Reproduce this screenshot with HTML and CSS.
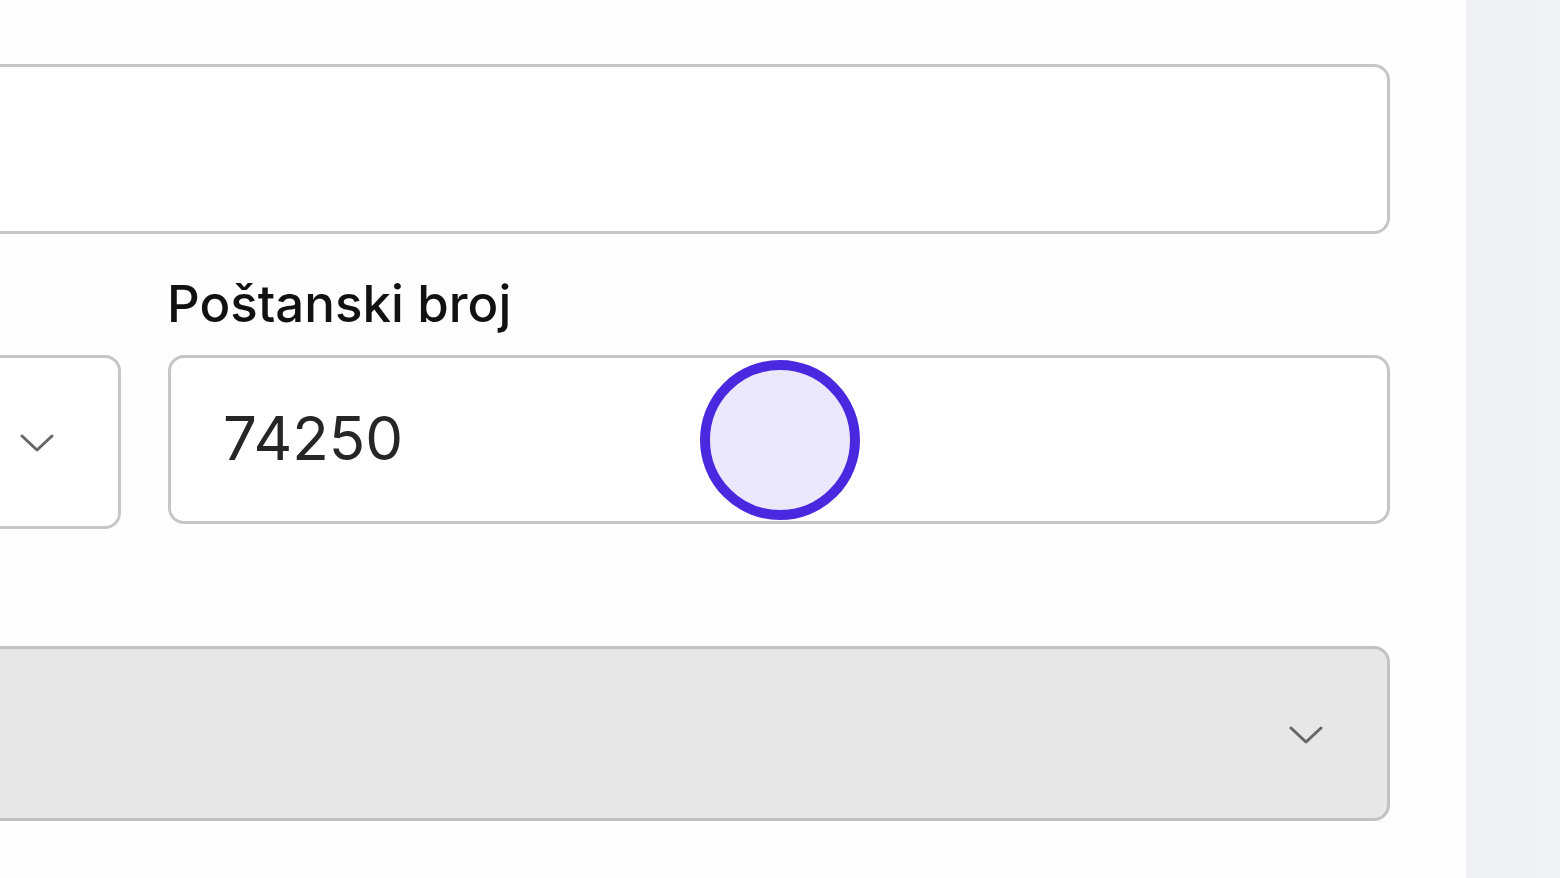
FILE: index.html
```html
<!DOCTYPE html>
<html lang="bs">
<head>
<meta charset="utf-8">
<title>Adresa</title>
<link rel="stylesheet" href="styles.css">
</head>
<body>
<div class="page">
  <main class="main">
    <form class="form">
      <div class="field field-top">
        <div class="input input-tall"></div>
      </div>
      <div class="row">
        <div class="col col-left">
          <div class="label label-spacer">&nbsp;</div>
          <div class="select select-left">
            <svg class="chev" viewBox="0 0 34 20" width="34" height="20"><path d="M2 3 L17 17 L32 3" fill="none" stroke="#666" stroke-width="3" stroke-linecap="round" stroke-linejoin="round"/></svg>
          </div>
        </div>
        <div class="col col-right">
          <div class="label">Poštanski broj</div>
          <div class="input input-postal"><span class="value">74250</span></div>
        </div>
      </div>
      <div class="select select-bottom">
        <svg class="chev" viewBox="0 0 34 20" width="34" height="20"><path d="M2 3 L17 17 L32 3" fill="none" stroke="#666" stroke-width="3" stroke-linecap="round" stroke-linejoin="round"/></svg>
      </div>
    </form>
    <div class="tap"></div>
  </main>
  <aside class="side"></aside>
</div>
</body>
</html>
```
FILE: styles.css
```css
* { box-sizing: border-box; }
html, body { margin: 0; padding: 0; }
body {
  font-family: Inter, "Noto Sans", "Liberation Sans", sans-serif;
  background: #ffffff;
  width: 1560px;
  height: 878px;
  overflow: hidden;
}
.page {
  display: flex;
  width: 1560px;
  height: 878px;
}
.main {
  position: relative;
  flex: 1;
  background: #fefefe;
  overflow: hidden;
}
.side {
  width: 94px;
  background: linear-gradient(to right, #eef0f3, #f0f2f6);
}
.form {
  margin-left: -200px;
  margin-right: 76px;
  padding-top: 64px;
  display: flex;
  flex-direction: column;
}
.input, .select {
  border: 3px solid #c6c6c6;
  border-radius: 16px;
  background: #ffffff;
}
.input-tall { height: 170px; }
.row {
  display: flex;
  gap: 47px;
  margin-top: 40px;
}
.col { display: flex; flex-direction: column; }
.col-left { width: 321px; }
.col-right { flex: 1; }
.label {
  font-size: 51px;
  line-height: 60px;
  color: #111111;
  font-weight: 500;
  height: 60px;
  margin-bottom: 21px;
  letter-spacing: 0;
  margin-left: -1px;
}
.select-left {
  height: 174px;
  display: flex;
  align-items: center;
  justify-content: flex-end;
  padding-right: 64px;
}
.select-left .chev { margin-top: 2px; }
.input-postal {
  height: 169px;
  display: flex;
  align-items: center;
  padding-left: 52px;
}
.value {
  font-size: 60px;
  color: #262626;
  letter-spacing: 0;
  margin-top: -4px;
}
.select-bottom {
  margin-top: 117px;
  height: 175px;
  background: #e7e7e7;
  border-color: #c2c2c2;
  display: flex;
  align-items: center;
  justify-content: flex-end;
  padding-right: 64px;
}
.select-bottom .chev { margin-top: 2px; }
.tap {
  position: absolute;
  left: 700px;
  top: 360px;
  width: 160px;
  height: 160px;
  border-radius: 50%;
  border: 10px solid #4a28e0;
  background: #ebe8fb;
}
```
